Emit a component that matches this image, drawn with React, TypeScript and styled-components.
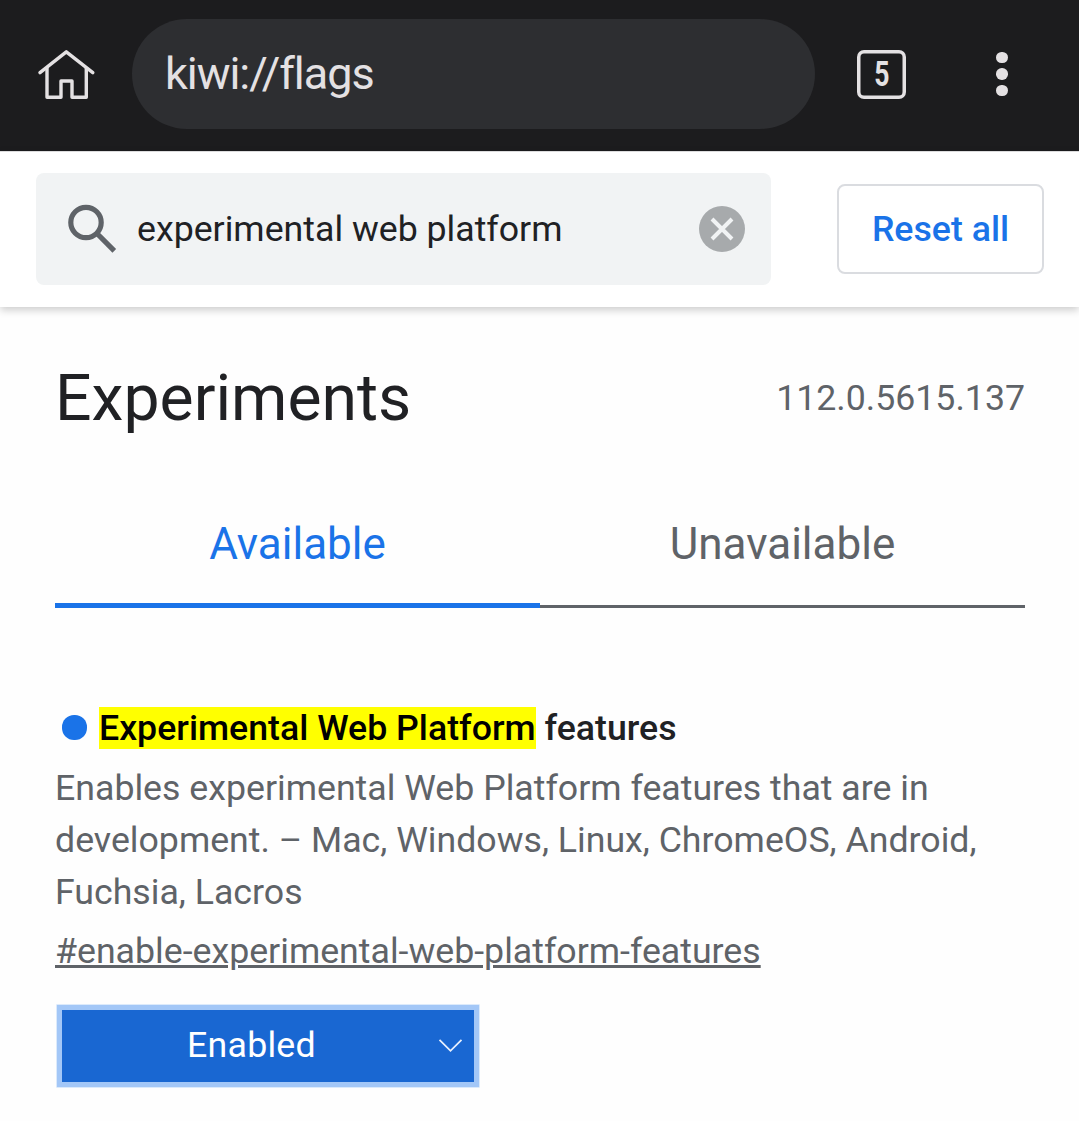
import React from "react";
import styled, { createGlobalStyle } from "styled-components";

const GlobalStyle = createGlobalStyle`
  * { box-sizing: border-box; }
  body { margin: 0; background: #fff; font-family: Roboto, "Liberation Sans", sans-serif; }
`;

const Page = styled.div`
  width: 1079px;
  height: 1121px;
  overflow: hidden;
  background: #fefefe;
  color: #202124;
`;

const BrowserBar = styled.header`
  display: flex;
  align-items: center;
  height: 151px;
  padding: 0 0 3px 36px;
  background: #1c1c1e;
  color: #e4e1e3;
`;

const AddressBar = styled.div`
  display: flex;
  align-items: center;
  width: 683px;
  height: 110px;
  margin-left: 36px;
  padding: 0 33px;
  border-radius: 55px;
  background: #2d2e31;
  font-size: 45px;
  line-height: 60px;
  letter-spacing: -1.05px;
`;

const TabCount = styled.div`
  display: flex;
  align-items: center;
  justify-content: center;
  width: 49px;
  height: 49px;
  margin-left: 42px;
  border-radius: 7px;
  box-shadow: inset 0 0 0 3.5px #e4e1e3;
  font-size: 34.5px;
  font-weight: 700;
  line-height: 40px;
`;

const Digit = styled.span`
  transform: scaleX(0.77);
`;

const Menu = styled.div`
  display: flex;
  flex-direction: column;
  gap: 5px;
  margin-left: 90px;
`;

const MenuDot = styled.i`
  width: 11.5px;
  height: 11.5px;
  border-radius: 50%;
  background: #e4e1e3;
`;

const SearchHeader = styled.div`
  display: flex;
  align-items: center;
  justify-content: space-between;
  height: 156px;
  padding: 0 35px 2px 36px;
  border-top: 1px solid #dcdcdd;
  background: #fff;
  box-shadow: 0 3px 8px rgba(0, 0, 0, 0.2);
`;

const SearchBox = styled.div`
  display: flex;
  align-items: center;
  width: 735px;
  height: 112px;
  padding: 0 26px 0 31px;
  border-radius: 8px;
  background: #f1f3f4;
`;

const Query = styled.span`
  flex: 1;
  margin-left: 20px;
  font-size: 35.7px;
  line-height: 48px;
`;

const ResetButton = styled.button`
  width: 207px;
  height: 90px;
  padding: 0;
  border: 2px solid #dadce0;
  border-radius: 8px;
  background: #fff;
  color: #1a73e8;
  font: 500 35.7px/48px Roboto, sans-serif;
`;

const Content = styled.main`
  padding: 51px 54px 0 55px;
`;

const TitleRow = styled.div`
  display: flex;
  align-items: center;
  justify-content: space-between;
  height: 80px;
`;

const Title = styled.h1`
  margin: 0;
  font-size: 64.3px;
  font-weight: 400;
  line-height: 80px;
`;

const Version = styled.span`
  color: #5f6368;
  font-size: 35.7px;
  line-height: 48px;
`;

const Tabs = styled.div`
  display: flex;
  align-items: flex-end;
  height: 100px;
  margin-top: 70px;
`;

const Tab = styled.div<{ $active?: boolean }>`
  flex: 1;
  display: flex;
  justify-content: center;
  height: 100px;
  padding-top: 10px;
  border-bottom: 3px solid #5f6368;
  font-size: 44px;
  line-height: 52px;
  color: #5f6368;
  ${(p) => p.$active && `
    border-bottom: 5px solid #1a73e8;
    color: #1a73e8;
  `}
`;

const Experiment = styled.section`
  margin-top: 98px;
  font-size: 35.7px;
`;

const Name = styled.h2`
  display: flex;
  align-items: center;
  height: 44px;
  margin: 0;
  padding-left: 7px;
  font-size: 35.7px;
  font-weight: 500;
  line-height: 42px;
  white-space: pre;
`;

const Dot = styled.i`
  width: 25px;
  height: 25px;
  margin: -1px 12px 0 0;
  border-radius: 12px;
  background: #1a73e8;
`;

const Highlight = styled.mark`
  background: #ff0;
  color: #000;
`;

const Description = styled.p`
  margin: 12px 0 0;
  color: #5f6368;
  line-height: 52px;
  white-space: nowrap;
`;

const Permalink = styled.a`
  display: block;
  margin-top: 7px;
  color: #5f6368;
  line-height: 52px;
  text-decoration: underline;
`;

const Select = styled.div`
  display: flex;
  align-items: center;
  justify-content: space-between;
  width: 422px;
  height: 82px;
  margin: 28px 0 0 2px;
  padding: 0 11px 2px 125px;
  border: 5px solid #a3c7f7;
  box-shadow: 0 0 0 0.6px #c6dcf9;
  background: #1967d2;
  color: #fff;
  letter-spacing: 0.25px;
`;

const Chevron = styled.svg`
  margin-top: 1px;
`;

export default function App() {
  return (
    <Page>
      <GlobalStyle />
      <BrowserBar>
        <svg width="60" height="60" viewBox="36 44 60 60" fill="none" stroke="#e4e1e3" strokeWidth="3.400">
          <path d="M40 72.600 66.300 51.800 92.800 72.600" strokeLinecap="round" strokeLinejoin="round" />
          <path d="M47 67V97.200H61V81H72V97.200H86.300V67" strokeLinejoin="round" />
        </svg>
        <AddressBar>kiwi://flags</AddressBar>
        <TabCount><Digit>5</Digit></TabCount>
        <Menu><MenuDot /><MenuDot /><MenuDot /></Menu>
      </BrowserBar>
      <SearchHeader>
        <SearchBox>
          <svg width="50" height="50" viewBox="67 203.500 50 50" fill="none" stroke="#5f6368">
            <circle cx="86" cy="222" r="15.200" strokeWidth="5.200" />
            <path d="M96.500 232.500 114.300 250.300" strokeWidth="5.200" />
          </svg>
          <Query>experimental web platform</Query>
          <svg width="46" height="46" viewBox="0 0 46 46" fill="none">
            <circle cx="23" cy="23" r="23" fill="#a7aaac" />
            <path d="m13 13 20 20M33 13 13 33" stroke="#f1f3f4" strokeWidth="4" />
          </svg>
        </SearchBox>
        <ResetButton>Reset all</ResetButton>
      </SearchHeader>
      <Content>
        <TitleRow>
          <Title>Experiments</Title>
          <Version>112.0.5615.137</Version>
        </TitleRow>
        <Tabs>
          <Tab $active>Available</Tab>
          <Tab>Unavailable</Tab>
        </Tabs>
        <Experiment>
          <Name><Dot /><Highlight>Experimental Web Platform</Highlight> features</Name>
          <Description>
            Enables experimental Web Platform features that are in<br />
            development. – Mac, Windows, Linux, ChromeOS, Android,<br />
            Fuchsia, Lacros
          </Description>
          <Permalink>#enable-experimental-web-platform-features</Permalink>
          <Select>
            Enabled
            <Chevron width="25" height="15" viewBox="0 0 25 15" fill="none" stroke="#e8f0fe" strokeWidth="1.800">
              <path d="m1.500 1.800 11 11 11-11" />
            </Chevron>
          </Select>
        </Experiment>
      </Content>
    </Page>
  );
}
